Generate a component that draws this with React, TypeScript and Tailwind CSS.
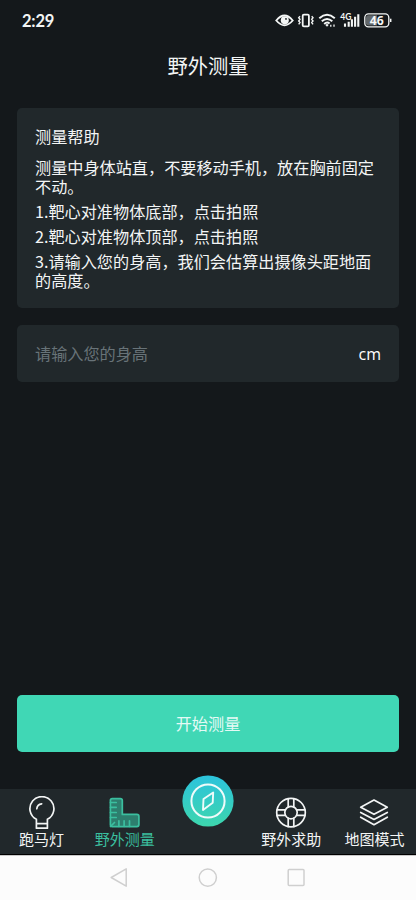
import type { ReactNode } from "react";

const steps = [
  "测量中身体站直，不要移动手机，放在胸前固定不动。",
  "1.靶心对准物体底部，点击拍照",
  "2.靶心对准物体顶部，点击拍照",
  "3.请输入您的身高，我们会估算出摄像头距地面的高度。",
];

function StatusIcons() {
  return (
    <svg width="120" height="20" viewBox="272 10 120 20" fill="none" stroke="#f4f6f6">
      {/* eye */}
      <path d="M276.3 20.5Q284.5 10.5 292.7 20.5Q284.5 30 276.3 20.5Z" strokeWidth="1.9" />
      <circle cx="284.8" cy="20.3" r="4" fill="#f4f6f6" stroke="none" />
      <circle cx="286" cy="18.9" r="0.9" fill="#14181b" stroke="none" />
      {/* vibrate */}
      <rect x="302.7" y="14.6" width="6.2" height="11.8" rx="1.2" strokeWidth="1.8" />
      <path d="M300 16.2l-1.3 1.5 1.3 1.5-1.3 1.8 1.3 1.5-1.3 1.8M311.7 16.2l1.3 1.5-1.3 1.5 1.3 1.8-1.3 1.5 1.3 1.8" strokeWidth="1.4" />
      {/* wifi */}
      <path d="M319.3 18.2Q327 11.4 334.8 18.2M321.8 21.2Q327 16.7 332.3 21.2M324.2 23.9Q327 21.5 329.6 23.5" strokeWidth="2" />
      <path d="M325.3 25L327 23.8L328.7 25L327 26.8Z" fill="#f4f6f6" stroke="none" />
      <path d="M330.8 24.8v2M334 24.4v2.4" strokeWidth="1.3" />
      {/* signal */}
      <text x="340.3" y="20.3" fontSize="8.5" fontWeight="700" fontFamily="Lato, sans-serif" fill="#f4f6f6" stroke="none">4G</text>
      <path d="M345 23.5v3.2M348.7 21.8v4.9M351.9 19.3v7.4M355.1 16.8v9.9M358.3 14.3v12.4" strokeWidth="2.1" />
      {/* battery */}
      <rect x="364.8" y="13.9" width="24" height="12.9" rx="3.6" strokeWidth="1.3" />
      <path d="M368 15.2h9v10.3h-9q-2-.3-2-2.3v-5.7q0-2 2-2.3" fill="#62676a" stroke="none" />
      <path d="M390.7 18.7v3.3" strokeWidth="1.5" />
      <text x="376.8" y="24.8" textAnchor="middle" fontSize="12.2" fontWeight="700" fontFamily="Open Sans, sans-serif" fill="#f4f6f6" stroke="none">46</text>
    </svg>
  );
}

function TabItem({ label, active, children }: { label: string; active?: boolean; children: ReactNode }) {
  return (
    <a href="#" className={`flex flex-1 flex-col items-center pt-[7px] ${active ? "text-[#3bbf9f]" : "text-[#f3f5f5]"}`}>
      <svg width="34" height="34" viewBox="0 0 34 34" fill="none" stroke="currentColor" strokeWidth="1.7" strokeLinejoin="round" strokeLinecap="round">
        {children}
      </svg>
      <span className="-mt-px text-[15px] leading-5 whitespace-nowrap">{label}</span>
    </a>
  );
}

export default function App() {
  return (
    <div className="flex h-[900px] w-[416px] flex-col bg-[#14181b] font-['Noto_Sans_CJK_SC',sans-serif] text-[#f3f5f5]">
      <header className="flex h-10 shrink-0 items-center justify-between pr-6 pl-[22px]">
        <span className="mt-px font-['Lato',sans-serif] text-[16.5px] leading-5 font-bold tracking-[-0.2px]">2:29</span>
        <StatusIcons />
      </header>

      <h1 className="h-[68px] shrink-0 text-center text-[20.3px] leading-[50px]">野外测量</h1>

      <main className="flex flex-1 flex-col px-[17px]">
        <section className="h-[200px] rounded-[5px] bg-[#21282b] px-[18px] pt-[19px] text-[16.15px] leading-[19px]">
          <h2 className="mb-3">测量帮助</h2>
          <div className="flex flex-col gap-1.5">
            {steps.map((step) => (
              <p key={step} className="break-all">{step}</p>
            ))}
          </div>
        </section>

        <label className="mt-[17px] flex h-[57px] items-center justify-between rounded-[5px] bg-[#21282b] px-[18px] text-[16.15px]">
          <span className="text-[#687378]">请输入您的身高</span>
          <span className="font-['Open_Sans',sans-serif] text-[16px] text-white">cm</span>
        </label>

        <button className="mt-auto mb-[37.5px] h-[56.5px] rounded-[5px] bg-[#40d7b5] text-[16.15px] text-[#e5faf5]">
          开始测量
        </button>
      </main>

      <nav className="flex h-[66px] shrink-0 border-b border-black bg-[#21282b]">
        <TabItem label="跑马灯">
          <path d="M11.4 23.3A12 12 0 1 1 22.4 23.3V32.2H11.4ZM11.4 27.6H22.4M11.8 12.8Q12.2 8.2 16.7 7.8" />
        </TabItem>
        <TabItem label="野外测量" active>
          <path d="M4.2 2.6H12.3Q14.3 2.6 14.3 4.6V18.4H28.9Q30.9 18.4 30.9 20.4V28.6Q30.9 30.6 28.9 30.6H4.2Q2.4 30.6 2.4 28.6V4.6Q2.4 2.6 4.2 2.6Z" fill="#2d7f6e" />
          <path d="M2.5 6.5H8.2M2.5 11.3H8.2M2.5 16.5H8.2M2.5 21.5H8.2M2.5 30.5L6.5 26.5M10.9 30.3V24.8M16.1 30.3V24.8M21.5 30.3V24.8" />
        </TabItem>
        <a href="#" className="flex flex-1 justify-center">
          <svg className="-mt-[14px]" width="52" height="52" viewBox="-26 -26 52 52" fill="none" stroke="#effbfa">
            <defs>
              <linearGradient id="compass" x1="0" y1="0" x2="0" y2="1">
                <stop offset="0" stopColor="#2cc3dc" />
                <stop offset="1" stopColor="#3dd6ad" />
              </linearGradient>
            </defs>
            <circle r="25.6" fill="url(#compass)" stroke="none" />
            <circle r="16.6" strokeWidth="2" />
            <path d="M5.2 -8.5L4.7 1.8L-5 9L-4.5 -2Z" strokeWidth="1.9" strokeLinejoin="round" />
          </svg>
        </a>
        <TabItem label="野外求助">
          <circle cx="17" cy="16.6" r="14.3" />
          <circle cx="17" cy="16.6" r="6.2" />
          <path d="M14.2 2.8V11M19.8 2.8V11M14.2 22.2V30.4M19.8 22.2V30.4M3.2 13.8H11.4M3.2 19.4H11.4M22.6 13.8H30.8M22.6 19.4H30.8" />
        </TabItem>
        <TabItem label="地图模式">
          <path d="M17 4.1L30.3 11.2L17 18.3L3.7 11.2ZM3.7 16.4L17 23.5L30.3 16.4M3.7 21.2L17 28.7L30.3 21.2" />
        </TabItem>
      </nav>

      <footer className="flex h-[45px] shrink-0 items-center justify-center gap-[68px] border-t border-[#c9c9c9] bg-[#fcfcfc]">
        <svg width="20" height="20" viewBox="0 0 20 20" fill="none" stroke="#cfcfcf" strokeWidth="1.5" strokeLinejoin="round">
          <path d="M16.2 0.8V18.2L1.2 9.5Z" />
        </svg>
        <svg width="20" height="20" viewBox="0 0 20 20" fill="none" stroke="#cfcfcf" strokeWidth="1.5">
          <circle cx="9.8" cy="9.6" r="8.6" />
        </svg>
        <svg width="20" height="20" viewBox="0 0 20 20" fill="none" stroke="#cfcfcf" strokeWidth="1.5">
          <rect x="2.2" y="1.6" width="15.8" height="15.8" rx="1" />
        </svg>
      </footer>
    </div>
  );
}
